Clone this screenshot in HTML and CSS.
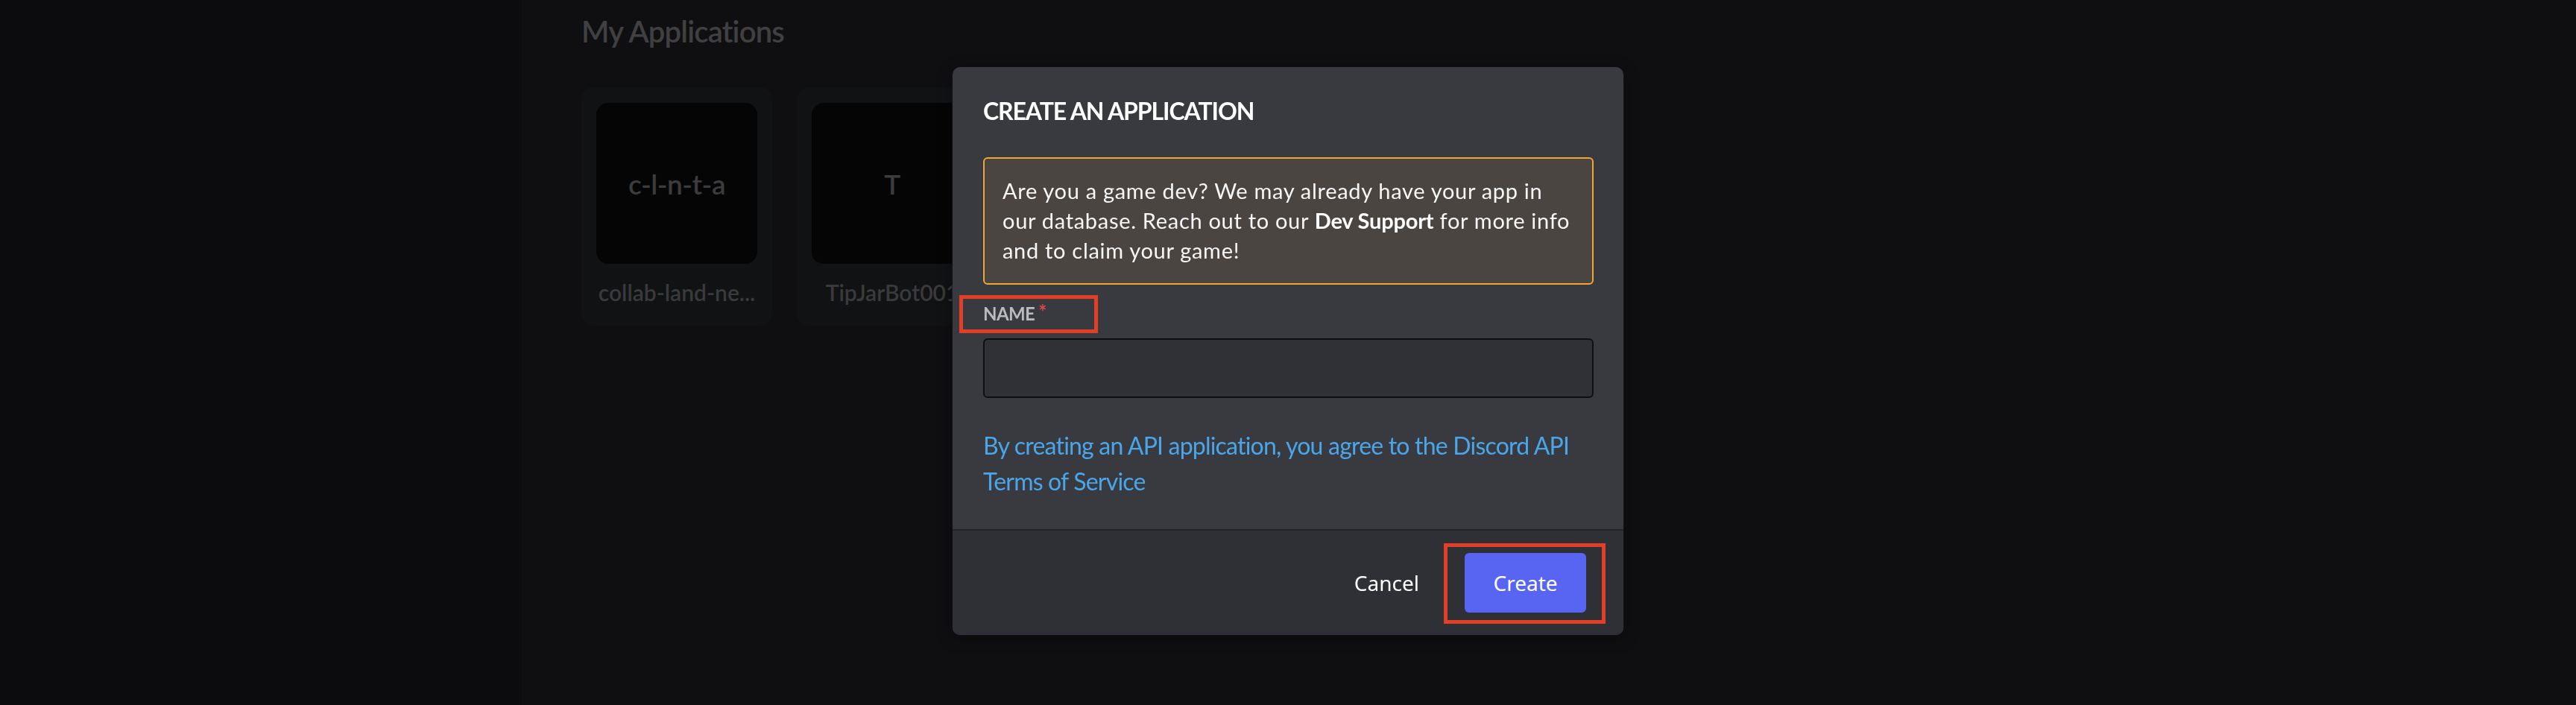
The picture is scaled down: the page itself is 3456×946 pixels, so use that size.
FILE: index.html
```html
<!DOCTYPE html>
<html lang="en">
<head>
<meta charset="utf-8">
<title>My Applications</title>
<link rel="stylesheet" href="styles.css">
</head>
<body>
<div class="app">
  <aside class="sidebar"></aside>
  <main class="main">
    <h1 class="page-title">My Applications</h1>
    <div class="app-grid">
      <div class="app-card">
        <div class="app-icon"><span class="app-initials">c-l-n-t-a</span></div>
        <div class="app-name">collab-land-ne...</div>
      </div>
      <div class="app-card">
        <div class="app-icon"><span class="app-initials">T</span></div>
        <div class="app-name">TipJarBot001</div>
      </div>
    </div>
  </main>
</div>
<div class="overlay">
  <div class="modal">
    <div class="modal-body">
      <h2 class="modal-title">CREATE AN APPLICATION</h2>
      <div class="notice">Are you a game dev? We may already have your app in<br>our database. Reach out to our <strong>Dev Support</strong> for more info<br>and to claim your game!</div>
      <div class="field-label">
        <span class="label-text">NAME<span class="req">*</span></span>
        <span class="annot annot-label"></span>
      </div>
      <div class="input"></div>
      <p class="terms">By creating an API application, you agree to the Discord API Terms of Service</p>
    </div>
    <div class="modal-footer">
      <button class="btn-link">Cancel</button>
      <div class="btn-wrap">
        <button class="btn-primary">Create</button>
        <span class="annot annot-btn"></span>
      </div>
    </div>
  </div>
</div>
</body>
</html>
```
FILE: styles.css
```css
* { box-sizing: border-box; margin: 0; padding: 0; }
html, body { height: 100%; }
body {
  background: #0f0f11;
  font-family: Lato, "Noto Sans", sans-serif;
  overflow: hidden;
}
.app { display: flex; height: 946px; }
.sidebar { width: 700px; flex: none; background: #0c0c0e; }
.main { flex: 1; padding: 18px 0 0 80px; background: #0f0f11; }
.page-title {
  font-size: 40px;
  line-height: 48px;
  font-weight: 600;
  letter-spacing: -0.8px;
  color: #404043;
}
.app-grid { display: flex; gap: 33px; margin-top: 51px; }
.app-card {
  width: 256px;
  height: 320px;
  padding: 21px 20px 0 20px;
  background: #111214;
  border-radius: 16px;
}
.app-icon {
  width: 216px;
  height: 216px;
  border-radius: 16px;
  background: #050505;
  display: flex;
  align-items: center;
  justify-content: center;
}
.app-initials {
  font-size: 37px;
  font-weight: 600;
  color: #3c3c3f;
  letter-spacing: -0.5px;
}
.app-name {
  margin-top: 21px;
  font-size: 30px;
  line-height: 34px;
  font-weight: 600;
  color: #3a3a3d;
  text-align: center;
  white-space: nowrap;
}
.overlay {
  position: fixed;
  inset: 0;
  display: flex;
  align-items: center;
  justify-content: center;
  padding-bottom: 4px;
}
.modal {
  width: 900px;
  background: #393a40;
  border-radius: 10px;
  overflow: hidden;
  box-shadow: 0 0 0 1px rgba(20,20,22,0.6), 0 4px 20px rgba(0,0,0,0.35);
}
.modal-body { padding: 40px 40px 40px 41px; }
.modal-title {
  font-size: 32px;
  line-height: 38px;
  font-weight: 700;
  letter-spacing: -1.1px;
  color: #ffffff;
}
.notice {
  margin-top: 43px;
  border: 2px solid #f0a732;
  border-radius: 6px;
  background: #4a4541;
  padding: 23px 24px 24px;
  font-size: 29px;
  line-height: 40px;
  letter-spacing: 0.7px;
  white-space: nowrap;
  color: #f6f6f7;
}
.notice strong { font-weight: 700; color: #ffffff; letter-spacing: -0.2px; }
.field-label {
  position: relative;
  margin-top: 23px;
  margin-bottom: 17px;
  font-size: 24px;
  line-height: 32px;
  font-weight: 700;
  color: #b9bbbe;
  letter-spacing: -0.6px;
}
.req {
  color: #e0474a;
  font-size: 26px;
  line-height: 0;
  margin-left: 5px;
  vertical-align: 2px;
}
.annot {
  position: absolute;
  border: 5px solid #e23e28;
  pointer-events: none;
}
.annot-label { left: -32px; top: -9px; width: 186px; height: 51px; }
.input {
  height: 80px;
  background: #303136;
  border: 2px solid #0e0f10;
  border-radius: 6px;
}
.terms {
  margin-top: 40px;
  font-size: 32px;
  line-height: 48px;
  letter-spacing: -0.8px;
  color: #4aa6e9;
}
.modal-footer {
  display: flex;
  justify-content: flex-end;
  align-items: center;
  background: #2f3035;
  border-top: 2px solid #222326;
  padding: 30px 50px 30px;
}
.btn-link {
  background: none;
  border: none;
  color: #ffffff;
  font-family: "Noto Sans", "Open Sans", sans-serif;
  font-size: 28px;
  margin-right: 61px;
}
.btn-wrap { position: relative; }
.btn-primary {
  display: block;
  width: 163px;
  height: 80px;
  border: none;
  border-radius: 6px;
  background: #5865f2;
  color: #ffffff;
  font-family: "Noto Sans", "Open Sans", sans-serif;
  font-size: 28px;
}
.annot-btn { left: -28px; top: -13px; width: 217px; height: 108px; }
```
